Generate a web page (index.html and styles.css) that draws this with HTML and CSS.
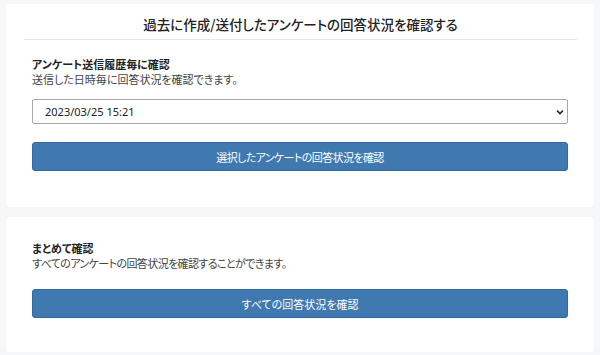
FILE: index.html
```html
<!DOCTYPE html>
<html lang="ja">
<head>
  <meta charset="UTF-8">
  <meta name="viewport" content="width=device-width, initial-scale=1">
  <title>回答状況の確認</title>
  <link rel="stylesheet" href="styles.css">
</head>
<body>

<section class="card card-history">
  <h1 class="card-title">過去に作成/送付したアンケートの回答状況を確認する</h1>

  <div class="block">
    <h2 class="block-label">アンケート送信履歴毎に確認</h2>
    <p class="block-desc">送信した日時毎に回答状況を確認できます。</p>
    <div class="select-wrap">
      <select class="history-select">
        <option>2023/03/25 15:21</option>
      </select>
      <svg class="chevron" width="8" height="6" viewBox="0 0 8 6">
        <path d="M1 1.5 L4 4.5 L7 1.5" fill="none" stroke="#222" stroke-width="1.6"/>
      </svg>
    </div>
    <button class="btn-primary tight">選択したアンケートの回答状況を確認</button>
  </div>
</section>

<section class="card card-all">
  <div class="block">
    <h2 class="block-label">まとめて確認</h2>
    <p class="block-desc tight">すべてのアンケートの回答状況を確認することができます。</p>
    <button class="btn-primary">すべての回答状況を確認</button>
  </div>
</section>

</body>
</html>
```

FILE: styles.css
```css
body {
  margin: 0;
  padding: 4px 6px;
  background: #f6f7f9;
  font-family: "Noto Sans CJK JP", sans-serif;
  color: #222;
  font-feature-settings: "palt";
}
.card {
  background: #fff;
  border-radius: 4px;
  padding: 0 26px;
}
.card-history {
  padding-top: 10px;
  padding-bottom: 36px;
  margin-bottom: 10px;
}
.card-all {
  padding-top: 24px;
  padding-bottom: 34px;
}
.card-title {
  margin: 0 -9px 0 -8px;
  padding-bottom: 5px;
  border-bottom: 1px solid #e3e5e8;
  font-size: 13.5px;
  font-weight: 500;
  line-height: 20px;
  text-align: center;
  color: #222;
}
.card-history .block {
  padding-top: 17px;
}
.block-label {
  margin: 0;
  font-size: 11px;
  font-weight: 700;
  line-height: 15px;
}
.block-desc {
  margin: 0;
  font-size: 11px;
  line-height: 15px;
  color: #444;
}
.tight {
  letter-spacing: -0.6px;
}
.select-wrap {
  position: relative;
  margin-top: 12px;
}
.history-select {
  display: block;
  width: 100%;
  height: 25px;
  padding: 0 12px;
  border: 1px solid #a9a9a9;
  border-radius: 2px;
  background: #fff;
  font-family: "Noto Sans", sans-serif;
  font-size: 11px;
  color: #222;
  appearance: none;
  -webkit-appearance: none;
}
.chevron {
  position: absolute;
  right: 4px;
  top: 10px;
}
.btn-primary {
  display: block;
  width: 100%;
  height: 29px;
  margin-top: 18px;
  border: 1px solid #2f69a0;
  border-radius: 3px;
  background: #3f79b0;
  color: #fff;
  font-family: "Noto Sans CJK JP", sans-serif;
  font-size: 11px;
  font-feature-settings: "palt";
}
```
